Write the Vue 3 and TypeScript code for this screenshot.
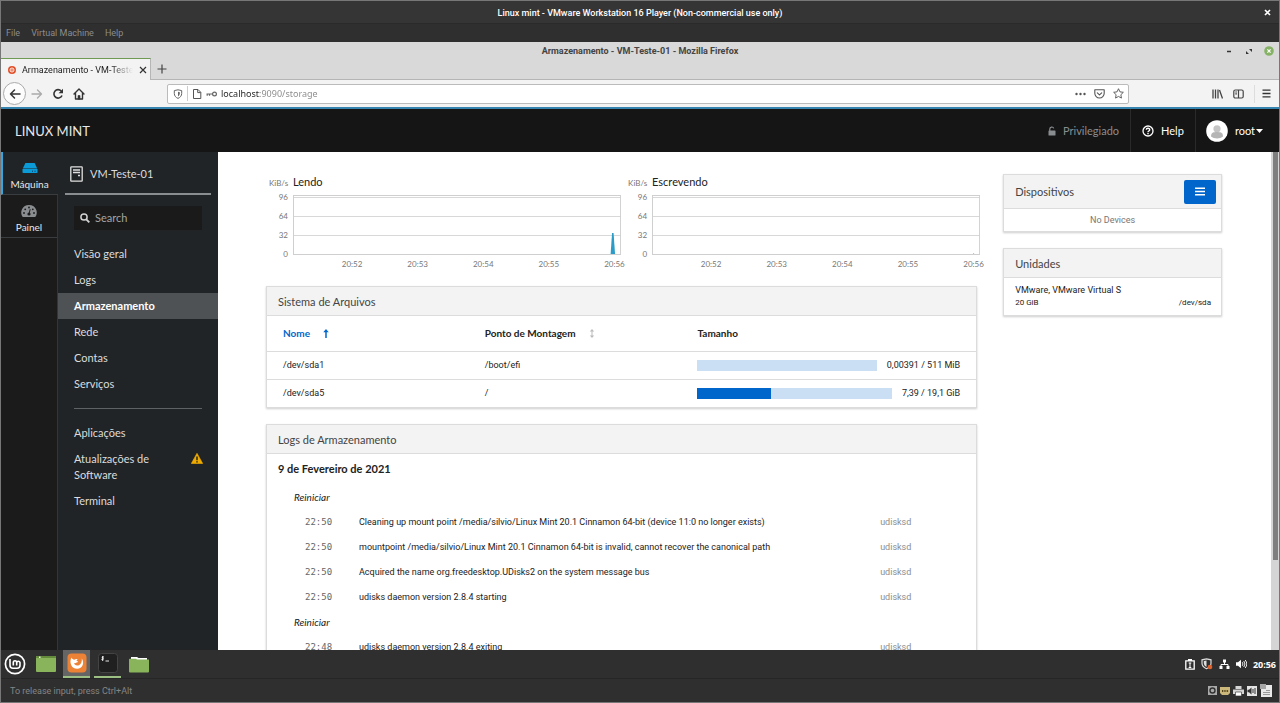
<script setup lang="ts">
import { ref } from 'vue'

interface Chart { title: string; spike: string }
interface NavItem { label: string; active?: boolean }
interface LogRow { time: string; text: string }
interface FileSystem { name: string; mount: string; usage: string; percent: number }

const url = ref('localhost:9090/storage')
const search = ref('')

const charts: Chart[] = [
  { title: 'Lendo', spike: 'M317.500 59.500 319 38h1.500l1.500 21.500z' },
  { title: 'Escrevendo', spike: 'M321 59.500v-1h1v1z' },
]
const yLabels = ['96', '64', '32', '0']
const xLabels = ['20:52', '20:53', '20:54', '20:55', '20:56']

const machineNav: NavItem[] = [
  { label: 'Visão geral' },
  { label: 'Logs' },
  { label: 'Armazenamento', active: true },
  { label: 'Rede' },
  { label: 'Contas' },
  { label: 'Serviços' },
]

const fileSystems: FileSystem[] = [
  { name: '/dev/sda1', mount: '/boot/efi', usage: '0,00391 / 511 MiB', percent: 0 },
  { name: '/dev/sda5', mount: '/', usage: '7,39 / 19,1 GiB', percent: 38 },
]

const logGroups: { title: string; rows: LogRow[] }[] = [
  {
    title: 'Reiniciar',
    rows: [
      { time: '22:50', text: 'Cleaning up mount point /media/silvio/Linux Mint 20.1 Cinnamon 64-bit (device 11:0 no longer exists)' },
      { time: '22:50', text: 'mountpoint /media/silvio/Linux Mint 20.1 Cinnamon 64-bit is invalid, cannot recover the canonical path' },
      { time: '22:50', text: 'Acquired the name org.freedesktop.UDisks2 on the system message bus' },
      { time: '22:50', text: 'udisks daemon version 2.8.4 starting' },
    ],
  },
  { title: 'Reiniciar', rows: [{ time: '22:48', text: 'udisks daemon version 2.8.4 exiting' }] },
]
</script>

<template>
  <div class="player">
    <header class="player-title">
      <span>Linux mint - VMware Workstation 16 Player (Non-commercial use only)</span>
      <button class="player-close" aria-label="Close">
        <svg width="7" height="7" viewBox="0 0 7 7"><path d="M1 1l5 5M6 1 1 6" stroke="#fff" stroke-width="1.700" /></svg>
      </button>
    </header>
    <nav class="player-menu">
      <button>File</button><button>Virtual Machine</button><button>Help</button>
    </nav>

    <section class="browser">
      <div class="browser-title">
        <span>Armazenamento - VM-Teste-01 - Mozilla Firefox</span>
        <div class="window-buttons">
          <button aria-label="Minimize"><svg width="10" height="10" viewBox="0 0 10 10"><path d="M3 5.500h4" stroke="#333" stroke-width="1.500" /></svg></button>
          <button aria-label="Maximize"><svg width="10" height="10" viewBox="0 0 10 10"><path d="M5 3h3v3zM2 5v3h3z" fill="#333" /></svg></button>
          <button aria-label="Close window"><svg width="10" height="10" viewBox="0 0 10 10"><circle cx="5" cy="5" r="4.800" fill="#86b266" /><path d="M3.400 3.400l3.200 3.200m0-3.200L3.400 6.600" stroke="#fff" stroke-width="1.200" /></svg></button>
        </div>
      </div>

      <div class="tabs">
        <div class="tab">
          <svg width="8" height="8" viewBox="0 0 8 8"><circle cx="4" cy="4" r="4" fill="#e2502a" /><circle cx="4" cy="4" r="2" fill="none" stroke="#fff" stroke-width=".9" /><circle cx="4" cy="4" r=".7" fill="#fff" /></svg>
          <span class="tab-label">Armazenamento - VM-Teste</span>
          <button aria-label="Close tab"><svg width="8" height="8" viewBox="0 0 8 8"><path d="M1 1l6 6M7 1 1 7" stroke="#333" stroke-width="1.200" /></svg></button>
        </div>
        <button class="new-tab" aria-label="New tab"><svg width="10" height="10" viewBox="0 0 10 10"><path d="M5 .5v9M.5 5h9" stroke="#444" stroke-width="1.200" /></svg></button>
      </div>

      <div class="toolbar">
        <div class="tool-left">
          <button class="back" aria-label="Back"><svg width="12" height="12" viewBox="0 0 12 12" fill="none" stroke="#333" stroke-width="1.500" stroke-linecap="round" stroke-linejoin="round"><path d="M11 6H1.500M5.500 2l-4 4 4 4" /></svg></button>
          <button aria-label="Forward"><svg width="12" height="12" viewBox="0 0 12 12" fill="none" stroke="#aaa" stroke-width="1.300" stroke-linecap="round" stroke-linejoin="round"><path d="M1 6h9.500M6.500 2l4 4-4 4" /></svg></button>
          <button aria-label="Reload"><svg width="12" height="12" viewBox="0 0 12 12"><path d="M10 7.500A4.200 4.200 0 1 1 9.200 3" fill="none" stroke="#333" stroke-width="1.600" /><path d="M11 .8v4.400H6.600z" fill="#333" /></svg></button>
          <button aria-label="Home"><svg width="12" height="12" viewBox="0 0 12 12" fill="none" stroke="#333" stroke-width="1.400" stroke-linejoin="round" stroke-linecap="round"><path d="M1 6l5-5 5 5M2.500 5.500V11h7V5.500" /><path d="M5 11V7.500h2V11z" fill="#333" stroke-width=".6" /></svg></button>
        </div>
        <div class="urlbar">
          <svg width="10" height="10" viewBox="0 0 10 10"><path d="M5 .8l3.700.8v2.800C8.700 6.800 7.200 8.500 5 9.400 2.800 8.500 1.300 6.800 1.300 4.400V1.600z" fill="none" stroke="#666" /><path d="M5 2.800v4.600c1.200-.8 1.800-1.800 1.800-3.200V3.200z" fill="#666" /></svg>
          <i class="url-divider"></i>
          <svg width="10" height="10" viewBox="0 0 10 10"><path d="M1.500.5h4.500L8.800 3.300v6.200H1.500zM5.700.7v2.900h3" fill="none" stroke="#555" stroke-linejoin="round" /></svg>
          <svg width="11" height="6" viewBox="0 0 11 6" fill="none" stroke="#666" stroke-width="1.200"><circle cx="8.500" cy="3" r="1.900" /><path d="M6.500 3H.5M1.200 3v1.800M3.500 3v1.800" /></svg>
          <input v-model="url" class="url-input" aria-label="Address" />
          <div class="url-actions">
            <button aria-label="Page actions"><svg width="11" height="10" viewBox="0 0 11 10" fill="#555"><circle cx="1.500" cy="5" r="1.200" /><circle cx="5.500" cy="5" r="1.200" /><circle cx="9.500" cy="5" r="1.200" /></svg></button>
            <button aria-label="Save to Pocket"><svg width="11" height="10" viewBox="0 0 11 10" fill="none" stroke="#555" stroke-width="1.100" stroke-linecap="round" stroke-linejoin="round"><path d="M.8.8h9.400v3.500a4.700 4.700 0 0 1-9.400 0zM3.300 3.800l2.200 2 2.200-2" /></svg></button>
            <button aria-label="Bookmark"><svg width="11" height="11" viewBox="0 0 12 12" fill="none" stroke="#555" stroke-linejoin="round"><path d="M6 .8l1.600 3.400 3.700.5-2.700 2.600.6 3.700L6 9.200 2.800 11l.6-3.700L.7 4.700l3.700-.5z" /></svg></button>
          </div>
        </div>
        <div class="tool-right">
          <button aria-label="Library"><svg width="11" height="10" viewBox="0 0 11 10" stroke="#444" stroke-width="1.300"><path d="M1 .5v9M3.500 .5v9M6 .5v9M7.500 1l3 8.500" /></svg></button>
          <button aria-label="Sidebars"><svg width="11" height="10" viewBox="0 0 11 10" fill="none" stroke="#444" stroke-width="1.200"><rect x=".8" y="1" width="9.400" height="8" rx="1.500" /><path d="M5.500 1v8M2.300 3h1.600M2.300 4.800h1.600" /></svg></button>
          <i class="tool-divider"></i>
          <button aria-label="Menu"><svg width="9" height="9" viewBox="0 0 9 9" stroke="#333" stroke-width="1.300"><path d="M.5 1.200h8M.5 4.500h8M.5 7.800h8" /></svg></button>
        </div>
      </div>

      <div class="cockpit">
        <header class="masthead">
          <h1>LINUX MINT</h1>
          <div class="mast-items">
            <span class="mast-item dim">
              <svg width="8" height="10" viewBox="0 0 8 10"><path d="M1.800 5V3a2 2 0 0 1 3.900-.6" fill="none" stroke="#8a8d90" stroke-width="1.200" /><rect x=".5" y="4.500" width="7" height="5" rx=".6" fill="#8a8d90" /></svg>
              Privilegiado
            </span>
            <button class="mast-item">
              <svg width="12" height="12" viewBox="0 0 12 12" fill="none" stroke="#fff"><circle cx="6" cy="6" r="5" stroke-width="1.300" /><path d="M4.300 4.800c0-2 3.400-2 3.400 0C7.700 6 6 6 6 7.200" stroke-width="1.400" /><path d="M6 8v1.300" stroke-width="1.400" /></svg>
              Help
            </button>
            <button class="mast-item user">
              <svg width="22" height="22" viewBox="0 0 22 22"><circle cx="11" cy="11" r="10.800" fill="#fff" /><circle cx="11" cy="8.800" r="3.600" fill="#c4c4c4" /><path d="M5 16.500c0-4 2.500-4.500 6-4.500s6 .5 6 4.500c-3 2.500-9 2.500-12 0z" fill="#b5b5b5" /></svg>
              <span>root</span>
              <svg width="7" height="4" viewBox="0 0 7 4"><path d="M0 0h7L3.500 4z" fill="#fff" /></svg>
            </button>
          </div>
        </header>

        <div class="body">
          <nav class="rail" aria-label="Host">
            <a href="#maquina" class="rail-item on">
              <svg width="16" height="12" viewBox="0 0 16 12"><path d="M3.400 1h9.200l2.600 5.500H.8z" fill="#0a9bd8" /><path d="M.5 7h15v3.300a.8.800 0 0 1-.8.800H1.300a.8.800 0 0 1-.8-.8z" fill="#0a9bd8" /><path d="M10 9.200h1M12.500 9.200h1" stroke="#135" /></svg>
              Máquina
            </a>
            <a href="#painel" class="rail-item">
              <svg width="16" height="12" viewBox="0 0 16 12"><path d="M8 0a7.600 7.600 0 0 0-6.300 12h12.600A7.600 7.600 0 0 0 8 0z" fill="#8a8d90" /><g fill="#1b1b1b"><circle cx="3" cy="8" r=".9" /><circle cx="4.200" cy="4.300" r=".9" /><circle cx="8" cy="2.500" r=".9" /><circle cx="11.800" cy="4.300" r=".9" /><circle cx="13" cy="8" r=".9" /><circle cx="8" cy="9" r="1.600" /></g><path d="M8 9l1.200-4.800" stroke="#1b1b1b" /></svg>
              Painel
            </a>
          </nav>

          <nav class="sidebar" aria-label="System">
            <div class="host">
              <svg width="13" height="16" viewBox="0 0 13 16" fill="none" stroke="#e0e0e0" stroke-width="1.300"><rect x=".8" y=".8" width="11.400" height="14.400" rx=".6" /><path d="M3 4h7M3 6.500h7M8 9.500h2" /></svg>
              VM-Teste-01
            </div>
            <label class="search">
              <svg width="10" height="10" viewBox="0 0 10 10" fill="none" stroke="#d2d2d2" stroke-width="1.500"><circle cx="4" cy="4" r="3.100" /><path d="M6.300 6.300 9.300 9.300" stroke-width="1.900" /></svg>
              <input v-model="search" type="search" placeholder="Search" aria-label="Search" />
            </label>
            <ul>
              <li v-for="item in machineNav" :key="item.label"><a href="#nav" :class="{ active: item.active }">{{ item.label }}</a></li>
            </ul>
            <hr />
            <ul>
              <li><a href="#apps">Aplicações</a></li>
              <li>
                <a href="#updates">
                  <span>Atualizações de Software</span>
                  <svg width="12" height="11" viewBox="0 0 12 11"><path d="M6 .3 11.700 10.500H.3z" fill="#f0ab00" stroke="#f0ab00" stroke-width=".6" stroke-linejoin="round" /><path d="M6 3.500v3.700M6 8.200v1.300" stroke="#212427" stroke-width="1.500" /></svg>
                </a>
              </li>
              <li><a href="#terminal">Terminal</a></li>
            </ul>
          </nav>

          <main class="content">
            <div class="primary">
              <div class="charts">
                <section v-for="chart in charts" :key="chart.title" class="chart">
                  <span class="unit">KiB/s</span>
                  <h2>{{ chart.title }}</h2>
                  <div class="y-axis"><span v-for="y in yLabels" :key="y">{{ y }}</span></div>
                  <svg class="plot" viewBox="0 0 328 60" preserveAspectRatio="none">
                    <path d="M0 2.500h328M0 21.500h328M0 40.500h328" stroke="#d8d8d8" fill="none" />
                    <path :d="chart.spike" fill="#2b9bc7" />
                    <rect x=".5" y=".5" width="327" height="59" fill="none" stroke="#cfcfcf" />
                  </svg>
                  <div class="x-axis"><span v-for="x in xLabels" :key="x">{{ x }}</span></div>
                </section>
              </div>

              <section class="card">
                <h3>Sistema de Arquivos</h3>
                <table class="fs">
                  <thead>
                    <tr>
                      <th class="c-name">
                        <button class="sorted">Nome <svg width="6" height="9" viewBox="0 0 6 9"><path d="M3 9V2" stroke="#06c" stroke-width="1.500" /><path d="M.3 3.300 3 0l2.700 3.300z" fill="#06c" /></svg></button>
                      </th>
                      <th class="c-mount">
                        <button>Ponto de Montagem <svg width="6" height="9" viewBox="0 0 6 9"><path d="M3 2v5" stroke="#bbb" /><path d="M.8 2.500 3 0l2.200 2.500zM.8 6.500 3 9l2.200-2.500z" fill="#bbb" /></svg></button>
                      </th>
                      <th>Tamanho</th>
                    </tr>
                  </thead>
                  <tbody>
                    <tr v-for="fs in fileSystems" :key="fs.name">
                      <td>{{ fs.name }}</td>
                      <td>{{ fs.mount }}</td>
                      <td>
                        <div class="usage">
                          <div class="bar"><div class="fill" :style="{ width: fs.percent + '%' }"></div></div>
                          <span>{{ fs.usage }}</span>
                        </div>
                      </td>
                    </tr>
                  </tbody>
                </table>
              </section>

              <section class="card">
                <h3>Logs de Armazenamento</h3>
                <h4>9 de Fevereiro de 2021</h4>
                <table class="logs">
                  <colgroup><col class="col-time" /><col /><col class="col-service" /></colgroup>
                  <tbody v-for="(group, g) in logGroups" :key="g">
                    <tr><th colspan="3">{{ group.title }}</th></tr>
                    <tr v-for="(row, r) in group.rows" :key="r">
                      <td class="time">{{ row.time }}</td>
                      <td>{{ row.text }}</td>
                      <td class="service">udisksd</td>
                    </tr>
                  </tbody>
                </table>
              </section>
            </div>

            <aside class="secondary">
              <section class="card">
                <h3 class="with-action">
                  Dispositivos
                  <button class="kebab" aria-label="Device actions"><svg width="10" height="9" viewBox="0 0 10 9" stroke="#fff" stroke-width="1.600"><path d="M0 1.200h10M0 4.500h10M0 7.800h10" /></svg></button>
                </h3>
                <p class="empty">No Devices</p>
              </section>
              <section class="card">
                <h3>Unidades</h3>
                <a href="#drive" class="drive">
                  <span>VMware, VMware Virtual S</span>
                  <span class="drive-meta"><span>20 GiB</span><span>/dev/sda</span></span>
                </a>
              </section>
            </aside>
          </main>
          <div class="scroll"><div class="thumb"></div></div>
        </div>
      </div>
    </section>

    <footer class="taskbar">
      <button aria-label="Menu">
        <svg width="22" height="22" viewBox="0 0 22 22" fill="none" stroke="#fff"><circle cx="11" cy="11" r="9.600" stroke-width="1.700" /><path d="M6 6v6.200a3 3 0 0 0 3 3h4a3 3 0 0 0 3-3V9.500a1.700 1.700 0 0 0-3.300 0V12.500M12.700 9.500a1.700 1.700 0 0 0-3.400 0V12.500" stroke-width="1.600" /></svg>
      </button>
      <button aria-label="Show desktop"><svg width="20" height="16" viewBox="0 0 20 16"><rect width="20" height="16" rx="1" fill="#8ab45c" /><path d="M0 1a1 1 0 0 1 1-1h18a1 1 0 0 1 1 1v1H0z" fill="#648b3c" /><path d="M3 .5h1.500v1.500H3z" fill="#eee" /></svg></button>
      <button class="running focused" aria-label="Firefox">
        <svg width="20" height="20" viewBox="0 0 20 20"><rect x=".5" y=".5" width="19" height="19" rx="4" fill="#ec8236" /><path d="M4.500 4.500C2 9 4 15.800 10.200 15.800c5.300 0 7.600-5.800 4.600-10.300.2 2.500-.3 5.500-2.800 6.700-2.300 1-4.800-.2-5-2.200.8.500 1.800.3 2.600-.4l1.500-.6c.2-.8-1.200-1-1.600-1.300.2-.8.800-1.200 1.300-1.700C9 5.800 8 6 7.300 6.700 6.200 6.300 5 6 4.500 4.500z" fill="#fff" /></svg>
      </button>
      <button class="running" aria-label="Terminal">
        <svg width="20" height="20" viewBox="0 0 20 20"><rect x=".5" y=".5" width="19" height="19" rx="3" fill="#202020" stroke="#444" /><path d="M6 4.200c-1.500-1-2.500.7-1.200 1.100C6.200 5.700 5 7.300 3.400 6.300M4.700 3v5M7.500 8h3.500" fill="none" stroke="#fff" stroke-width=".9" /></svg>
      </button>
      <button aria-label="Files"><svg width="20" height="17" viewBox="0 0 20 17"><path d="M2 1h6l1.500 1H18V6H2z" fill="#fff" /><path d="M0 3.500a.8.800 0 0 1 .8-.8H7L8 3.500h12v12a1 1 0 0 1-1 1H1a1 1 0 0 1-1-1z" fill="#8ab45c" /></svg></button>
      <div class="tray">
        <svg width="10" height="11" viewBox="0 0 10 11"><path d="M.8 1.800h8.400v8.400H.8z" fill="none" stroke="#fff" stroke-width="1.300" /><path d="M3 0h4v2H3z" fill="#fff" /><path d="M5 4v4.500M3.700 4h2.600M3.700 8.500h2.600" stroke="#fff" /></svg>
        <svg width="12" height="12" viewBox="0 0 12 12"><path d="M5.500.8l4.500 1v3.500c0 2.600-1.800 4.300-4.500 5.400C2.800 9.600 1 7.900 1 5.300V1.800z" fill="none" stroke="#ddd" stroke-width="1.200" /><path d="M5.500 2.500v6.500C4 8.200 2.800 7 2.800 5V3z" fill="#ddd" /><circle cx="9" cy="9" r="2.300" fill="#e0632e" /></svg>
        <svg width="11" height="11" viewBox="0 0 11 11"><path d="M4 .5h3v3H4zM.5 7h3v3h-3zM7.500 7h3v3h-3z" fill="#fff" /><path d="M5.500 3v2.500M2 7.500v-2h7v2" fill="none" stroke="#fff" /></svg>
        <svg width="11" height="10" viewBox="0 0 11 10"><path d="M0 3.300h2L5 .8v8.400L2 6.700H0z" fill="#fff" /><path d="M6.300 3.200q1.300 1.800 0 3.600M7.800 2q2.300 3 0 6M9.200 1q3.200 4 0 8" fill="none" stroke="#fff" stroke-width=".9" /></svg>
        <time>20:56</time>
      </div>
    </footer>
    <footer class="status">
      <span>To release input, press Ctrl+Alt</span>
      <div class="devices">
        <svg width="9" height="9" viewBox="0 0 9 9"><rect width="9" height="9" fill="#aaa" /><circle cx="4.500" cy="4.500" r="2.500" fill="none" stroke="#333" stroke-width="1.400" /></svg>
        <svg width="10" height="8" viewBox="0 0 10 8"><path d="M0 0h10v6L8 8H2L0 6z" fill="#cdb87b" /><path d="M2.500 3v2M4.200 3v2M5.900 3v2M7.600 3v2" stroke="#54461c" /></svg>
        <svg width="11" height="10" viewBox="0 0 11 10"><path d="M2.500 0h6v3h-6zM0 3.500h11v4.500H0z" fill="#d5d5d5" /><path d="M2.500 6h6v4h-6z" fill="#fff" stroke="#444" stroke-width=".7" /></svg>
        <svg width="10" height="10" viewBox="0 0 10 10"><rect width="10" height="10" fill="#e5e5e5" /><path d="M.5 3.700h1.500L4.500 1.500v7L2 6.300H.5z" fill="#333" /><path d="M6 3v4M8 2v6" stroke="#333" /></svg>
        <svg width="12" height="13" viewBox="0 0 12 13"><path d="M3 1h9v12H1V4z" fill="#e9e9e9" /><path d="M0 0h6v5H0z" fill="#a5a5a5" /><path d="M6 6.500h4M3 8.500h7M3 10.500h7" stroke="#999" /></svg>
      </div>
    </footer>
  </div>
</template>

<style>
body {
  margin: 0;
}
</style>

<style scoped>
* {
  box-sizing: border-box;
}
.player {
  height: 100vh;
  display: flex;
  flex-direction: column;
  border: 1px solid #777;
  background: #2f2f2f;
  font-family: Lato, Roboto, sans-serif;
  overflow: hidden;
}
h1, h2, h3, h4, p, ul {
  margin: 0;
  padding: 0;
  font-weight: 400;
}
ul {
  list-style: none;
}
svg {
  display: block;
  flex: none;
}
button, input {
  font: inherit;
  color: inherit;
  border: 0;
  padding: 0;
  background: none;
  outline: none;
}
a {
  color: inherit;
  text-decoration: none;
}
.player-title {
  position: relative;
  flex: none;
  height: 23px;
  display: flex;
  align-items: center;
  justify-content: center;
  padding-top: 1px;
  background: #353535;
  border-bottom: 1px solid #2a2a2a;
  color: #fff;
  font: 500 9px Roboto, sans-serif;
}
.player-close {
  position: absolute;
  right: 8px;
}
.player-menu {
  flex: none;
  height: 18px;
  display: flex;
  align-items: center;
  gap: 11px;
  padding: 0 5px;
  color: #8c8c8c;
  font: 9px Roboto, sans-serif;
}
.browser {
  flex: 1;
  min-height: 0;
  display: flex;
  flex-direction: column;
}
.browser-title {
  position: relative;
  flex: none;
  height: 16px;
  display: flex;
  align-items: center;
  justify-content: center;
  padding-top: 2px;
  background: #d9d9d9;
  color: #444;
  font: 700 9px Roboto, sans-serif;
}
.window-buttons {
  position: absolute;
  right: 5px;
  display: flex;
  gap: 10px;
}
.tabs {
  flex: none;
  height: 22px;
  display: flex;
  background: #d9d9d9;
  border-bottom: 1px solid #b5b5b5;
}
.tab {
  width: 150px;
  height: 22px;
  display: flex;
  align-items: center;
  gap: 6px;
  padding: 0 7px;
  background: #f3f3f3;
  border-top: 1px solid #6f9a54;
  border-right: 1px solid #b5b5b5;
  color: #222;
  font: 9px Roboto, sans-serif;
}
.tab-label {
  flex: 1;
  white-space: nowrap;
  mask-image: linear-gradient(90deg, #000 80%, transparent);
}
.new-tab {
  padding: 0 6px;
}
.toolbar {
  flex: none;
  height: 29px;
  display: flex;
  align-items: center;
  background: #f3f3f3;
  border-bottom: 2px solid #3584b0;
}
.tool-left {
  width: 166px;
  display: flex;
  align-items: center;
  gap: 9px;
  padding-left: 2px;
}
.tool-left .back {
  width: 23px;
  height: 23px;
  display: grid;
  place-items: center;
  border: 1px solid #aaa;
  border-radius: 50%;
  background: #fcfcfc;
  margin-right: -4px;
}
.urlbar {
  flex: 1;
  height: 20px;
  display: flex;
  align-items: center;
  gap: 4px;
  padding: 0 4px 0 5px;
  background: #fff;
  border: 1px solid #bbb;
  border-radius: 2px;
}
.url-divider {
  width: 1px;
  height: 15px;
  background: #ccc;
}
.url-input {
  flex: 1;
  min-width: 0;
  font: 9px "Noto Sans", sans-serif;
  color: transparent;
  background: linear-gradient(90deg, #222 39px, #888 39px);
  background-clip: text;
}
.url-actions {
  display: flex;
  gap: 8px;
}
.tool-right {
  width: 150px;
  display: flex;
  align-items: center;
  justify-content: flex-end;
  gap: 10px;
  padding-right: 8px;
}
.tool-divider {
  width: 1px;
  height: 18px;
  margin-right: -3px;
  background: #ddd;
}
.cockpit {
  flex: 1;
  min-height: 0;
  display: flex;
  flex-direction: column;
}
.masthead {
  flex: none;
  height: 43px;
  display: flex;
  align-items: center;
  justify-content: space-between;
  background: #151515;
  color: #fff;
}
.masthead h1 {
  padding-left: 14px;
  font-size: 13px;
  color: #e8e8e8;
}
.mast-items {
  height: 100%;
  display: flex;
}
.mast-item {
  display: flex;
  align-items: center;
  gap: 7px;
  padding: 0 11px;
  font-size: 11px;
  border-left: 1px solid #2a2a2a;
}
.mast-item.dim {
  color: #8a8d90;
  border: 0;
}
.mast-item.user {
  padding-right: 16px;
  padding-left: 10px;
}
.mast-item.user span {
  margin-right: -6px;
}
.body {
  flex: 1;
  min-height: 0;
  display: flex;
  background: #fff;
}
.rail {
  flex: none;
  width: 57px;
  background: #1b1b1b;
  border-right: 1px solid #30363a;
  color: #e8e8e8;
  font-size: 10px;
  line-height: 14px;
}
.rail-item {
  height: 43px;
  display: flex;
  flex-direction: column;
  align-items: center;
  justify-content: center;
  gap: 3px;
  padding-top: 6px;
  border-bottom: 1px solid #3a3d40;
}
.rail-item.on {
  margin-right: -1px;
  padding-right: 2px;
  background: #212427;
  border-left: 2px solid #39a5dc;
}
.sidebar {
  flex: none;
  width: 160px;
  background: #212427;
  color: #dcdcdc;
  font-size: 11px;
  line-height: 16px;
}
.host {
  height: 43px;
  margin: 0 7px 11px;
  padding: 3px 0 0 5px;
  display: flex;
  align-items: center;
  gap: 7px;
  border-bottom: 2px solid #8a8d90;
}
.search {
  height: 24px;
  margin: 0 16px 11px;
  padding: 0 6px;
  display: flex;
  align-items: center;
  gap: 5px;
  background: #1a1a1a;
}
.search input {
  flex: 1;
  min-width: 0;
}
.search input::placeholder {
  color: #a5a5a5;
}
.sidebar a {
  display: flex;
  justify-content: space-between;
  padding: 5px 16px;
}
.sidebar a span {
  width: 80px;
}
.sidebar a svg {
  margin: 2px -1px 0 0;
}
.sidebar a.active {
  background: #4f5255;
  color: #fff;
  font-weight: 700;
}
.sidebar hr {
  height: 1px;
  margin: 11px 16px;
  border: 0;
  background: #5f6265;
}
.content {
  flex: 1;
  min-width: 0;
  display: grid;
  grid-template-columns: minmax(0, 13fr) minmax(0, 4fr);
  align-items: start;
  column-gap: 26px;
  padding: 22px 49px 0 48px;
  overflow: hidden;
  color: #222;
  font-size: 10px;
}
.charts {
  display: grid;
  grid-template-columns: 1fr 1fr;
  gap: 4px;
  margin: 0 -3px 15px 0;
}
.chart {
  display: grid;
  grid-template-columns: 27px minmax(0, 1fr);
  color: #777;
  font-size: 8px;
}
.unit {
  padding-left: 3px;
  line-height: 18px;
}
.chart h2 {
  font-size: 11px;
  line-height: 16px;
  padding-bottom: 5px;
  color: #222;
}
.y-axis {
  display: flex;
  flex-direction: column;
  align-items: flex-end;
  padding-right: 5px;
  margin: -7px 0 -9px;
  line-height: 19px;
}
.plot {
  width: 100%;
  height: 60px;
}
.x-axis {
  grid-column: 2;
  display: grid;
  grid-template-columns: repeat(5, 1fr);
  margin: 2px -8% 0 8%;
  text-align: center;
  line-height: 14px;
}
.card {
  margin-bottom: 16px;
  border: 1px solid #dcdcdc;
  box-shadow: 0 1px 2px #0003;
  background: #fff;
}
.card h3 {
  height: 29px;
  display: flex;
  align-items: center;
  justify-content: space-between;
  padding: 0 11px;
  background: #f3f3f3;
  border-bottom: 1px solid #dcdcdc;
  color: #444;
  font-size: 11px;
}
table {
  width: 100%;
  border-collapse: collapse;
  table-layout: fixed;
}
td, th {
  padding: 0;
  text-align: left;
}
td, .empty, .drive {
  font-family: Roboto, sans-serif;
  font-size: 9px;
}
.fs th {
  height: 35px;
  font-weight: 700;
}
.fs th button {
  display: flex;
  align-items: center;
  gap: 13px;
  font-weight: 700;
}
.fs .sorted {
  color: #06c;
}
.c-name {
  width: 30.7%;
}
.c-mount {
  width: 30%;
}
.fs tr > :first-child {
  padding-left: 16px;
}
.fs tr > :last-child {
  padding-right: 16px;
}
.fs td {
  height: 28px;
  border-top: 1px solid #dcdcdc;
}
.usage {
  display: flex;
  align-items: center;
  gap: 10px;
}
.bar {
  flex: 1;
  height: 11px;
  background: #cbdff4;
}
.fill {
  height: 100%;
  background: #06c;
}
.card h4 {
  padding-left: 11px;
  font-size: 11px;
  font-weight: 700;
  line-height: 30px;
}
.logs td, .logs th {
  height: 25px;
  white-space: nowrap;
}
.logs th {
  padding-left: 27px;
  font-weight: 400;
  font-style: italic;
}
.col-time {
  width: 92px;
}
.col-service {
  width: 96px;
}
.logs .time {
  padding-left: 38px;
  color: #666;
  font-family: "DejaVu Sans Mono", monospace;
}
.logs .service {
  color: #8a8d90;
}
.card .with-action {
  height: 34px;
  padding-right: 5px;
}
.kebab {
  width: 32px;
  height: 24px;
  display: grid;
  place-items: center;
  background: #06c;
  border-radius: 2px;
}
.empty {
  text-align: center;
  color: #777;
  line-height: 22px;
}
.drive {
  display: block;
  padding: 5px 10px 6px 11px;
  line-height: 14px;
}
.drive-meta {
  display: flex;
  justify-content: space-between;
  font-size: 8px;
  line-height: 12px;
}
.scroll {
  flex: none;
  width: 8px;
  background: #d5d5d5;
}
.thumb {
  width: 5px;
  height: 82%;
  margin-left: 2px;
  background: #7e7e7e;
}
.taskbar {
  flex: none;
  height: 28px;
  display: flex;
  align-items: center;
  padding: 0 3px 0 0;
  gap: 4px;
  background: #2f2f2f;
}
.taskbar button {
  width: 27px;
  height: 28px;
  display: grid;
  place-items: center;
}
.taskbar .running {
  border-bottom: 2px solid #9cbf83;
}
.taskbar .focused {
  background: #656565;
}
.tray {
  margin-left: auto;
  display: flex;
  align-items: center;
  gap: 6px;
  color: #fff;
  font: 700 9px "Noto Sans", sans-serif;
}
.status {
  flex: none;
  height: 24px;
  display: flex;
  align-items: center;
  justify-content: space-between;
  padding: 0 7px 0 9px;
  border-top: 1px solid #262626;
  color: #858585;
  font: 9px Roboto, sans-serif;
}
.devices {
  display: flex;
  align-items: center;
  gap: 3px;
}
</style>
